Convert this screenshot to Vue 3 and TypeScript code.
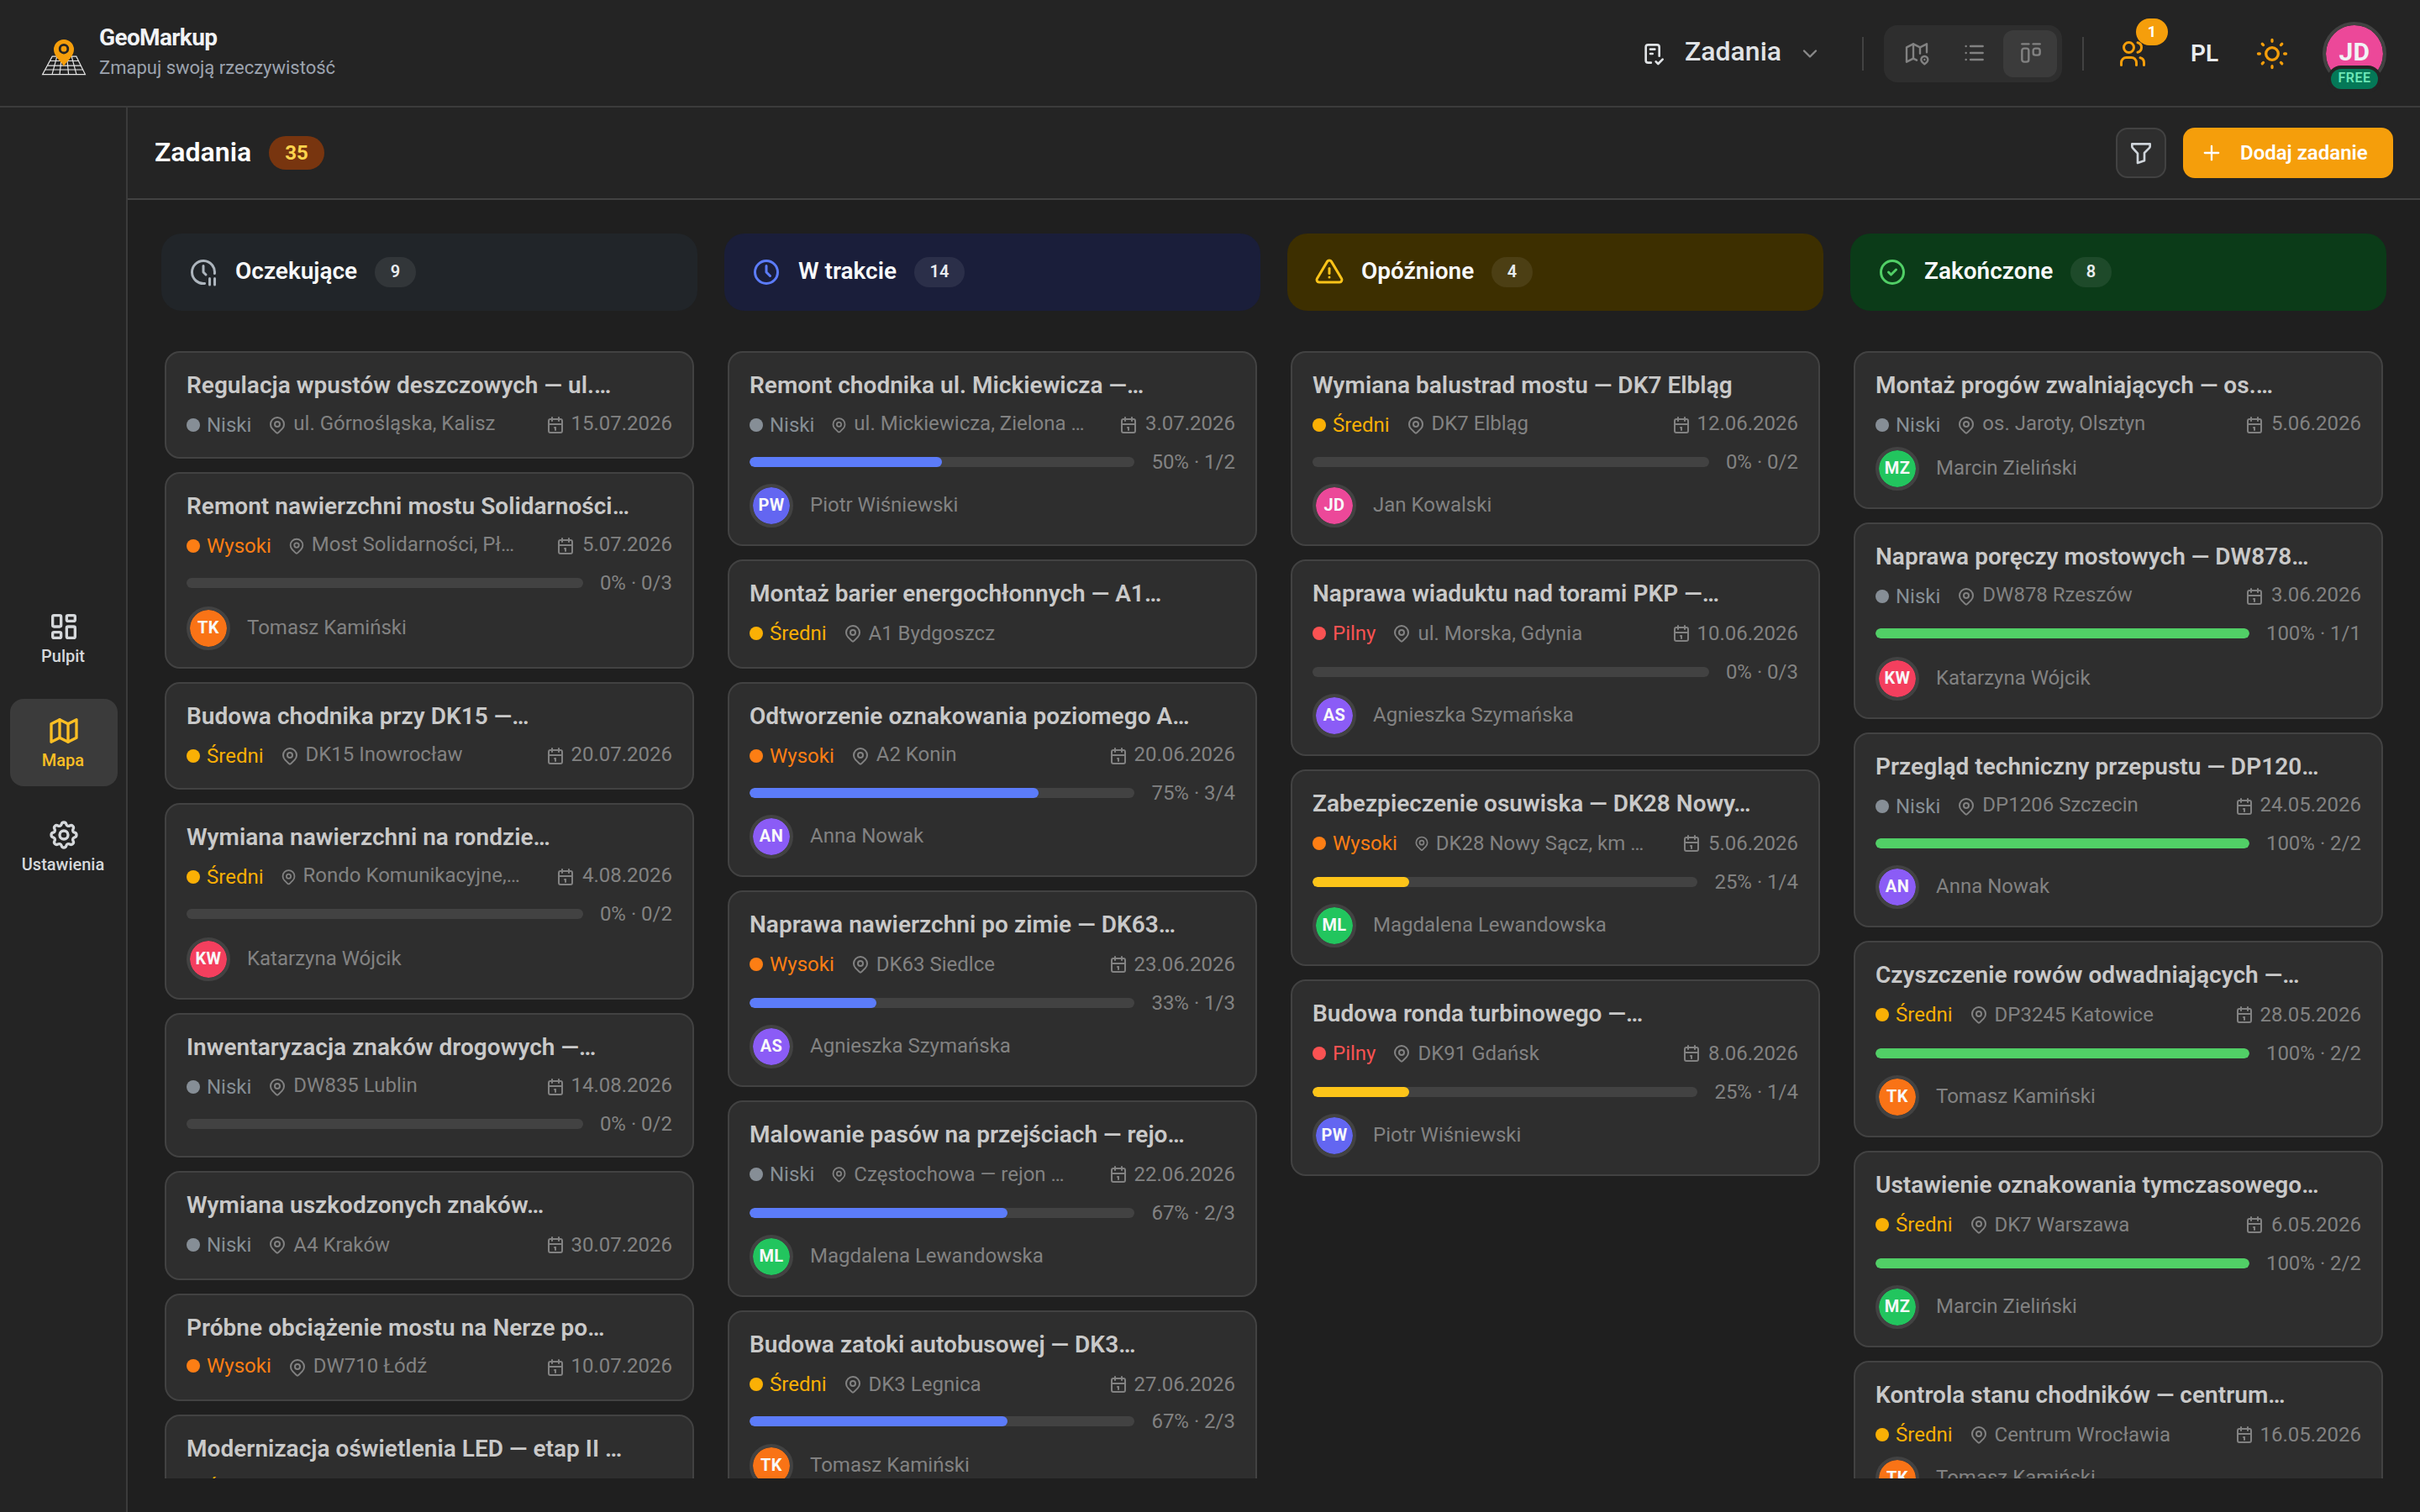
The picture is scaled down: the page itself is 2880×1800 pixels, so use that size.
<script setup lang="ts">
type Priority = 'low' | 'mid' | 'high' | 'urgent'

interface Task {
  h: number
  title: string
  prio: Priority
  place: string
  pin?: number
  date?: string
  pct?: number
  steps?: string
  who?: string
  // small vertical offsets of the card's rows, in pixels
  prioUp?: number
  placeDown?: number
  barDown?: number
  whoDown?: number
}

interface Column {
  key: string
  name: string
  icon: string[]
  count: number
  tasks: Task[]
}

const prioNames: Record<Priority, string> = {
  low: 'Niski',
  mid: 'Średni',
  high: 'Wysoki',
  urgent: 'Pilny',
}

const people: Record<string, { name: string; color: string }> = {
  TK: { name: 'Tomasz Kamiński', color: '#f97316' },
  KW: { name: 'Katarzyna Wójcik', color: '#f43f5e' },
  PW: { name: 'Piotr Wiśniewski', color: '#6366f1' },
  AN: { name: 'Anna Nowak', color: '#8b5cf6' },
  AS: { name: 'Agnieszka Szymańska', color: '#8b5cf6' },
  ML: { name: 'Magdalena Lewandowska', color: '#22c55e' },
  JD: { name: 'Jan Kowalski', color: '#ec4899' },
  MZ: { name: 'Marcin Zieliński', color: '#22c55e' },
}

const icons = {
  clockPause: ['M20.942 13.018a9 9 0 1 0 -7.909 7.922', 'M12 7v5l2 2', 'M17 17v5', 'M21 17v5'],
  clock: ['M3 12a9 9 0 1 0 18 0a9 9 0 0 0 -18 0', 'M12 7v5l3 3'],
  alert: [
    'M12 9v4',
    'M10.363 3.591l-8.106 13.534a1.914 1.914 0 0 0 1.636 2.871h16.214a1.914 1.914 0 0 0 1.636 -2.87l-8.106 -13.536a1.914 1.914 0 0 0 -3.274 0z',
    'M12 16h.01',
  ],
  check: ['M3 12a9 9 0 1 0 18 0a9 9 0 0 0 -18 0', 'M9 12l2 2l4 -4'],
  pin: [
    'M9 11a3 3 0 1 0 6 0a3 3 0 0 0 -6 0',
    'M17.657 16.657l-4.243 4.243a2 2 0 0 1 -2.827 0l-4.244 -4.243a8 8 0 1 1 11.314 0z',
  ],
  calendar: [
    'M4 7a2 2 0 0 1 2 -2h12a2 2 0 0 1 2 2v12a2 2 0 0 1 -2 2h-12a2 2 0 0 1 -2 -2v-12z',
    'M16 3v4',
    'M8 3v4',
    'M4 11h16',
    'M11 15h1',
    'M12 15v3',
  ],
  checklist: [
    'M9.615 20h-2.615a2 2 0 0 1 -2 -2v-12a2 2 0 0 1 2 -2h8a2 2 0 0 1 2 2v8',
    'M14 19l2 2l4 -4',
    'M9 8h4',
    'M9 12h2',
  ],
  chevron: ['M6 9l6 6l6 -6'],
  mapPin: [
    'M12 18.5l-3 -1.5l-6 3v-13l6 -3l6 3l6 -3v7.5',
    'M9 4v13',
    'M15 7v5.5',
    'M21.121 20.121a3 3 0 1 0 -4.242 0c.418 .419 1.125 1.045 2.121 1.879c1.051 -.89 1.759 -1.516 2.121 -1.879z',
    'M19 18v.01',
  ],
  list: ['M9 6l11 0', 'M9 12l11 0', 'M9 18l11 0', 'M5 6l0 .01', 'M5 12l0 .01', 'M5 18l0 .01'],
  kanban: [
    'M4 4l6 0',
    'M14 4l6 0',
    'M4 10a2 2 0 0 1 2 -2h2a2 2 0 0 1 2 2v8a2 2 0 0 1 -2 2h-2a2 2 0 0 1 -2 -2z',
    'M14 10a2 2 0 0 1 2 -2h2a2 2 0 0 1 2 2v2a2 2 0 0 1 -2 2h-2a2 2 0 0 1 -2 -2z',
  ],
  users: [
    'M5 7a4 4 0 1 0 8 0a4 4 0 1 0 -8 0',
    'M3 21v-2a4 4 0 0 1 4 -4h4a4 4 0 0 1 4 4v2',
    'M16 3.13a4 4 0 0 1 0 7.75',
    'M21 21v-2a4 4 0 0 0 -3 -3.85',
  ],
  sun: [
    'M8 12a4 4 0 1 0 8 0a4 4 0 1 0 -8 0',
    'M3 12h1m8 -9v1m8 8h1m-9 8v1m-6.4 -15.4l.7 .7m12.1 -.7l-.7 .7m0 11.4l.7 .7m-12.1 -.7l-.7 .7',
  ],
  filter: [
    'M4 4h16v2.172a2 2 0 0 1 -.586 1.414l-4.414 4.414v7l-6 2v-8.5l-4.48 -4.928a2 2 0 0 1 -.52 -1.345v-2.227z',
  ],
  plus: ['M12 5l0 14', 'M5 12l14 0'],
  dashboard: [
    'M5 4h4a1 1 0 0 1 1 1v6a1 1 0 0 1 -1 1h-4a1 1 0 0 1 -1 -1v-6a1 1 0 0 1 1 -1',
    'M5 16h4a1 1 0 0 1 1 1v2a1 1 0 0 1 -1 1h-4a1 1 0 0 1 -1 -1v-2a1 1 0 0 1 1 -1',
    'M15 12h4a1 1 0 0 1 1 1v6a1 1 0 0 1 -1 1h-4a1 1 0 0 1 -1 -1v-6a1 1 0 0 1 1 -1',
    'M15 4h4a1 1 0 0 1 1 1v2a1 1 0 0 1 -1 1h-4a1 1 0 0 1 -1 -1v-2a1 1 0 0 1 1 -1',
  ],
  map: ['M3 7l6 -3l6 3l6 -3v13l-6 3l-6 -3l-6 3v-13', 'M9 4v13', 'M15 7v13'],
  settings: [
    'M10.325 4.317c.426 -1.756 2.924 -1.756 3.35 0a1.724 1.724 0 0 0 2.573 1.066c1.543 -.94 3.31 .826 2.37 2.37a1.724 1.724 0 0 0 1.065 2.572c1.756 .426 1.756 2.924 0 3.35a1.724 1.724 0 0 0 -1.066 2.573c.94 1.543 -.826 3.31 -2.37 2.37a1.724 1.724 0 0 0 -2.572 1.065c-.426 1.756 -2.924 1.756 -3.35 0a1.724 1.724 0 0 0 -2.573 -1.066c-1.543 .94 -3.31 -.826 -2.37 -2.37a1.724 1.724 0 0 0 -1.065 -2.572c-1.756 -.426 -1.756 -2.924 0 -3.35a1.724 1.724 0 0 0 1.066 -2.573c-.94 -1.543 .826 -3.31 2.37 -2.37c1 .608 2.296 .07 2.572 -1.065z',
    'M9 12a3 3 0 1 0 6 0a3 3 0 0 0 -6 0',
  ],
}

const nav = [
  { label: 'Pulpit', icon: icons.dashboard, active: false },
  { label: 'Mapa', icon: icons.map, active: true },
  { label: 'Ustawienia', icon: icons.settings, active: false },
]

const views = [
  { icon: icons.mapPin, active: false },
  { icon: icons.list, active: false },
  { icon: icons.kanban, active: true },
]

const columns: Column[] = [
  {
    key: 'waiting',
    name: 'Oczekujące',
    icon: icons.clockPause,
    count: 9,
    tasks: [
      { h: 128, title: 'Regulacja wpustów deszczowych — ul.…', prio: 'low', place: 'ul. Górnośląska, Kalisz', date: '15.07.2026' },
      { h: 234, title: 'Remont nawierzchni mostu Solidarności…', prio: 'high', place: 'Most Solidarności, Pł…', pin: 22, date: '5.07.2026', pct: 0, steps: '0/3', who: 'TK', whoDown: 2 },
      { h: 128, title: 'Budowa chodnika przy DK15 —…', prio: 'mid', place: 'DK15 Inowrocław', date: '20.07.2026' },
      { h: 234, title: 'Wymiana nawierzchni na rondzie…', prio: 'mid', place: 'Rondo Komunikacyjne,…', pin: 21, date: '4.08.2026', pct: 0, steps: '0/2', who: 'KW', whoDown: 2 },
      { h: 172, title: 'Inwentaryzacja znaków drogowych —…', prio: 'low', place: 'DW835 Lublin', date: '14.08.2026', pct: 0, steps: '0/2' },
      { h: 130, title: 'Wymiana uszkodzonych znaków…', prio: 'low', place: 'A4 Kraków', date: '30.07.2026', placeDown: 2 },
      { h: 128, title: 'Próbne obciążenie mostu na Nerze po…', prio: 'high', place: 'DW710 Łódź', date: '10.07.2026', prioUp: 2 },
      { h: 130, title: 'Modernizacja oświetlenia LED — etap II …', prio: 'mid', place: 'Rzeszów', date: '25.07.2026' },
    ],
  },
  {
    key: 'progress',
    name: 'W trakcie',
    icon: icons.clock,
    count: 14,
    tasks: [
      { h: 232, title: 'Remont chodnika ul. Mickiewicza —…', prio: 'low', place: 'ul. Mickiewicza, Zielona …', pin: 21, date: '3.07.2026', pct: 50, steps: '1/2', who: 'PW' },
      { h: 130, title: 'Montaż barier energochłonnych — A1…', prio: 'mid', place: 'A1 Bydgoszcz', placeDown: 2 },
      { h: 232, title: 'Odtworzenie oznakowania poziomego A…', prio: 'high', place: 'A2 Konin', date: '20.06.2026', pct: 75, steps: '3/4', who: 'AN' },
      { h: 234, title: 'Naprawa nawierzchni po zimie — DK63…', prio: 'high', place: 'DK63 Siedlce', date: '23.06.2026', pct: 33, steps: '1/3', who: 'AS', placeDown: 2, barDown: 2 },
      { h: 234, title: 'Malowanie pasów na przejściach — rejo…', prio: 'low', place: 'Częstochowa — rejon …', pin: 21, date: '22.06.2026', pct: 67, steps: '2/3', who: 'ML', placeDown: 2, barDown: 2 },
      { h: 234, title: 'Budowa zatoki autobusowej — DK3…', prio: 'mid', place: 'DK3 Legnica', date: '27.06.2026', pct: 67, steps: '2/3', who: 'TK', placeDown: 2, whoDown: 1 },
    ],
  },
  {
    key: 'late',
    name: 'Opóźnione',
    icon: icons.alert,
    count: 4,
    tasks: [
      { h: 232, title: 'Wymiana balustrad mostu — DK7 Elbląg', prio: 'mid', place: 'DK7 Elbląg', date: '12.06.2026', pct: 0, steps: '0/2', who: 'JD' },
      { h: 234, title: 'Naprawa wiaduktu nad torami PKP —…', prio: 'urgent', place: 'ul. Morska, Gdynia', date: '10.06.2026', pct: 0, steps: '0/3', who: 'AS', placeDown: 2, barDown: 2 },
      { h: 234, title: 'Zabezpieczenie osuwiska — DK28 Nowy…', prio: 'high', place: 'DK28 Nowy Sącz, km …', pin: 20, date: '5.06.2026', pct: 25, steps: '1/4', who: 'ML', placeDown: 2, barDown: 2 },
      { h: 234, title: 'Budowa ronda turbinowego —…', prio: 'urgent', place: 'DK91 Gdańsk', date: '8.06.2026', pct: 25, steps: '1/4', who: 'PW', placeDown: 2, barDown: 2 },
    ],
  },
  {
    key: 'done',
    name: 'Zakończone',
    icon: icons.check,
    count: 8,
    tasks: [
      { h: 188, title: 'Montaż progów zwalniających — os.…', prio: 'low', place: 'os. Jaroty, Olsztyn', date: '5.06.2026', who: 'MZ' },
      { h: 234, title: 'Naprawa poręczy mostowych — DW878…', prio: 'low', place: 'DW878 Rzeszów', date: '3.06.2026', pct: 100, steps: '1/1', who: 'KW', whoDown: 2 },
      { h: 232, title: 'Przegląd techniczny przepustu — DP120…', prio: 'low', place: 'DP1206 Szczecin', date: '24.05.2026', pct: 100, steps: '2/2', who: 'AN' },
      { h: 234, title: 'Czyszczenie rowów odwadniających —…', prio: 'mid', place: 'DP3245 Katowice', date: '28.05.2026', pct: 100, steps: '2/2', who: 'TK', placeDown: 2, barDown: 2 },
      { h: 234, title: 'Ustawienie oznakowania tymczasowego…', prio: 'mid', place: 'DK7 Warszawa', date: '6.05.2026', pct: 100, steps: '2/2', who: 'MZ', placeDown: 2, barDown: 2 },
      { h: 188, title: 'Kontrola stanu chodników — centrum…', prio: 'mid', place: 'Centrum Wrocławia', date: '16.05.2026', who: 'TK', placeDown: 2 },
    ],
  },
]
</script>

<template>
  <div class="app">
    <header class="topbar">
      <div class="brand">
        <svg class="logo" viewBox="0 0 54 46">
          <g fill="none" stroke="#e6e6e6" stroke-width="1.2">
            <path d="M13.2 21.2h28.6L52.4 42.6H1.6z" />
            <path d="M11 26.5h33M8 32.2h39M4.9 37h45.2" />
            <path d="M18.8 21.2L13 42.6M24.4 21.2L22 42.6M30.6 21.2L32.6 42.6M36.2 21.2L42 42.6" />
          </g>
          <path
            d="M27 33C24 27 15 21.5 15 13a12 12 0 0 1 24 0C39 21.5 30 27 27 33z"
            fill="#f59e0b"
          />
          <circle cx="27" cy="12.2" r="4.8" fill="none" stroke="#242424" stroke-width="2.8" />
        </svg>
        <div class="brand-text">
          <div class="brand-name">GeoMarkup</div>
          <div class="brand-sub">Zmapuj swoją rzeczywistość</div>
        </div>
      </div>

      <div class="tools">
        <div class="switcher">
          <svg class="ic ic-task" viewBox="0 0 24 24"><path v-for="d in icons.checklist" :key="d" :d="d" /></svg>
          <span class="switcher-name">Zadania</span>
          <svg class="ic ic-chev" viewBox="0 0 24 24"><path v-for="d in icons.chevron" :key="d" :d="d" /></svg>
        </div>
        <span class="divider" />
        <div class="segment">
          <button v-for="(v, i) in views" :key="i" class="seg-btn" :class="{ active: v.active }">
            <svg class="ic ic-view" viewBox="0 0 24 24"><path v-for="d in v.icon" :key="d" :d="d" /></svg>
          </button>
        </div>
        <span class="divider divider-2" />
        <div class="team">
          <svg class="ic ic-users" viewBox="0 0 24 24"><path v-for="d in icons.users" :key="d" :d="d" /></svg>
          <span class="team-badge">1</span>
        </div>
        <span class="lang">PL</span>
        <svg class="ic ic-sun" viewBox="0 0 24 24"><path v-for="d in icons.sun" :key="d" :d="d" /></svg>
        <div class="me">
          <span class="me-initials">JD</span>
          <span class="me-plan">FREE</span>
        </div>
      </div>
    </header>

    <div class="body">
      <nav class="sidebar">
        <a v-for="n in nav" :key="n.label" class="nav-item" :class="{ active: n.active }">
          <svg class="ic ic-nav" viewBox="0 0 24 24"><path v-for="d in n.icon" :key="d" :d="d" /></svg>
          <span>{{ n.label }}</span>
        </a>
      </nav>

      <main class="main">
        <div class="toolbar">
          <h1>Zadania</h1>
          <span class="total">35</span>
          <button class="btn-filter">
            <svg class="ic ic-filter" viewBox="0 0 24 24"><path v-for="d in icons.filter" :key="d" :d="d" /></svg>
          </button>
          <button class="btn-add">
            <svg class="ic ic-plus" viewBox="0 0 24 24"><path v-for="d in icons.plus" :key="d" :d="d" /></svg>
            <span>Dodaj zadanie</span>
          </button>
        </div>

        <div class="board">
          <section v-for="c in columns" :key="c.key" class="column" :class="c.key">
            <div class="col-head">
              <svg class="ic ic-col" viewBox="0 0 24 24"><path v-for="d in c.icon" :key="d" :d="d" /></svg>
              <span class="col-name">{{ c.name }}</span>
              <span class="col-count">{{ c.count }}</span>
            </div>
            <div class="cards">
              <article v-for="t in c.tasks" :key="t.title" class="card" :style="{ height: t.h + 'px' }">
                <div class="title">{{ t.title }}</div>
                <div class="meta">
                  <span
                    class="prio"
                    :class="t.prio"
                    :style="{ marginTop: -2 * (t.prioUp ?? 0) + 'px' }"
                  ><i class="dot" />{{ prioNames[t.prio] }}</span>
                  <svg
                    class="ic ic-pin"
                    viewBox="0 0 24 24"
                    :style="{ width: (t.pin ?? 24) + 'px' }"
                  ><path v-for="d in icons.pin" :key="d" :d="d" /></svg>
                  <span class="muted" :style="{ marginTop: 2 * (t.placeDown ?? 0) - 4 + 'px' }">{{ t.place }}</span>
                  <span v-if="t.date" class="date" :class="{ short: t.date.length < 10 }">
                    <svg class="ic ic-cal" viewBox="0 0 24 24"><path v-for="d in icons.calendar" :key="d" :d="d" /></svg>
                    <span class="muted" :style="{ marginTop: 2 * (t.placeDown ?? 0) - 4 + 'px' }">{{ t.date }}</span>
                  </span>
                </div>
                <div v-if="t.steps" class="progress" :style="{ marginTop: 10 + (t.barDown ?? 0) + 'px' }">
                  <div class="track"><div class="fill" :style="{ width: t.pct + '%' }" /></div>
                  <span>{{ t.pct }}% · {{ t.steps }}</span>
                </div>
                <div v-if="t.who" class="person" :style="{ marginTop: (t.steps ? 8 : 10) + (t.whoDown ?? 0) + 'px' }">
                  <span class="avatar" :style="{ backgroundColor: people[t.who].color }">{{ t.who }}</span>
                  <span class="person-name">{{ people[t.who].name }}</span>
                </div>
              </article>
            </div>
          </section>
        </div>
      </main>
    </div>
  </div>
</template>

<style>
body {
  background: #1f1f1f;
}
</style>

<style scoped>
.app {
  display: flex;
  flex-direction: column;
  width: 2880px;
  height: 1800px;
  overflow: hidden;
  background: #1f1f1f;
  color: #f1f3f5;
  font-family: Roboto, 'Liberation Sans', sans-serif;
}
.app *,
.app {
  box-sizing: border-box;
}
button {
  padding: 0;
  border: 0;
  font-family: inherit;
}
.ic {
  display: block;
  flex: none;
  fill: none;
  stroke: currentColor;
  stroke-width: 2;
  stroke-linecap: round;
  stroke-linejoin: round;
}

.topbar {
  display: flex;
  flex: none;
  justify-content: space-between;
  height: 128px;
  padding: 0 40px 0 49px;
  border-bottom: 2px solid #3b3b3b;
  background: #242424;
}
.brand {
  display: flex;
  align-items: flex-start;
}
.logo {
  width: 54px;
  height: 46px;
  margin-top: 46px;
}
.brand-text {
  margin: 28px 0 0 15px;
}
.brand-name {
  font-size: 28px;
  font-weight: 700;
  letter-spacing: -0.65px;
  line-height: 34px;
}
.brand-sub {
  margin-top: 4px;
  color: #9ca3af;
  font-size: 22px;
  line-height: 30px;
}
.tools {
  display: flex;
  align-items: center;
  height: 128px;
}
.switcher {
  display: flex;
  align-items: center;
  width: 264px;
  color: #e0e3e6;
}
.ic-task {
  width: 32px;
  height: 32px;
}
.switcher-name {
  width: 135px;
  margin: -6px 0 0 21px;
  font-size: 32px;
  font-weight: 500;
  line-height: 40px;
}
.ic-chev {
  width: 28px;
  height: 28px;
  color: #8a8a8a;
}
.divider {
  width: 2px;
  height: 40px;
  background: #424242;
}
.segment {
  display: flex;
  gap: 4px;
  margin-left: 24px;
  padding: 6px;
  border-radius: 16px;
  background: #2e2e2e;
}
.seg-btn {
  display: flex;
  align-items: center;
  justify-content: center;
  width: 64px;
  height: 56px;
  border-radius: 12px;
  background: transparent;
  color: #828282;
}
.seg-btn.active {
  background: #3b3b3b;
}
.ic-view {
  width: 32px;
  height: 32px;
  margin: -2px 0 0 1px;
  stroke-width: 1.8;
}
.divider-2 {
  margin-left: 24px;
}
.team {
  position: relative;
  margin-left: 40px;
  color: #f59e0b;
}
.ic-users {
  width: 36px;
  height: 36px;
}
.team-badge {
  position: absolute;
  top: -24px;
  left: 22px;
  width: 38px;
  height: 32px;
  border-radius: 16px;
  background: #f59e0b;
  color: #fff;
  font-size: 18px;
  font-weight: 700;
  line-height: 31px;
  text-align: center;
}
.lang {
  width: 75px;
  margin-left: 51px;
  color: #e9ecef;
  font-size: 28px;
  font-weight: 600;
  line-height: 36px;
}
.ic-sun {
  width: 44px;
  height: 44px;
  color: #f59e0b;
  stroke-width: 1.8;
}
.me {
  position: relative;
  display: flex;
  align-items: center;
  justify-content: center;
  width: 76px;
  height: 76px;
  margin-left: 38px;
  border: 4px solid #424242;
  border-radius: 50%;
  background: #ec4899;
  background-clip: padding-box;
}
.me-initials {
  margin-top: -6px;
  font-size: 30px;
  font-weight: 700;
  letter-spacing: 0.3px;
}
.me-plan {
  position: absolute;
  top: 52px;
  left: 6px;
  width: 56px;
  height: 24px;
  border-radius: 12px;
  background: #047857;
  box-shadow: 0 0 0 4px #242424;
  color: #6ee7b7;
  font-size: 16px;
  font-weight: 600;
  letter-spacing: 0.5px;
  line-height: 22px;
  text-align: center;
}

.body {
  display: flex;
  flex: 1;
  min-height: 0;
}
.sidebar {
  display: flex;
  flex: none;
  flex-direction: column;
  gap: 20px;
  width: 152px;
  padding: 580px 0 0 12px;
  border-right: 2px solid #3b3b3b;
  background: #242424;
}
.nav-item {
  display: flex;
  flex-direction: column;
  align-items: center;
  width: 128px;
  height: 104px;
  padding-top: 18px;
  border-radius: 16px;
  color: #d5d8db;
  font-size: 20px;
  font-weight: 500;
  line-height: 26px;
}
.nav-item span {
  margin: 2px 2px 0 0;
}
.nav-item.active {
  background: #3b3b3b;
  color: #fbbf24;
}
.ic-nav {
  width: 40px;
  height: 40px;
}

.main {
  display: flex;
  flex: 1;
  flex-direction: column;
  min-width: 0;
}
.toolbar {
  display: flex;
  flex: none;
  align-items: center;
  height: 110px;
  padding: 0 32px 0 32px;
  border-bottom: 2px solid #424242;
  background: #242424;
}
h1 {
  margin: -2px 0 0;
  color: #fff;
  font-size: 32px;
  font-weight: 600;
  line-height: 40px;
}
.total {
  width: 66px;
  height: 40px;
  margin-left: 21px;
  border-radius: 20px;
  background: #78350f;
  color: #fcd34d;
  font-size: 24px;
  font-weight: 700;
  line-height: 40px;
  text-align: center;
}
.btn-filter {
  display: flex;
  align-items: center;
  justify-content: center;
  width: 60px;
  height: 60px;
  margin-left: auto;
  border: 2px solid #424242;
  border-radius: 14px;
  background: #2e2e2e;
  color: #ced4da;
}
.ic-filter {
  width: 32px;
  height: 32px;
}
.btn-add {
  display: flex;
  align-items: center;
  width: 250px;
  height: 60px;
  margin-left: 20px;
  padding-left: 20px;
  border-radius: 14px;
  background: #f59e0b;
  color: #fff;
  font-size: 24px;
  font-weight: 600;
}
.ic-plus {
  width: 28px;
  height: 28px;
}
.btn-add span {
  margin-left: 20px;
}

.board {
  display: grid;
  flex: 1;
  grid-template-columns: repeat(4, 638px);
  gap: 32px;
  min-height: 0;
  padding: 40px 40px 40px 40px;
}
.column {
  display: flex;
  flex-direction: column;
  min-height: 0;
}
.col-head {
  display: flex;
  flex: none;
  align-items: center;
  height: 92px;
  padding-left: 32px;
  border-radius: 24px;
}
.waiting .col-head {
  background: #212529;
}
.progress .col-head {
  background: #1a1e3a;
}
.late .col-head {
  background: #3d2f00;
}
.done .col-head {
  background: #0b3b18;
}
.ic-col {
  width: 36px;
  height: 36px;
}
.waiting .ic-col {
  color: #adb5bd;
}
.progress .ic-col {
  color: #5c7cfa;
}
.late .ic-col {
  color: #fcc419;
}
.done .ic-col {
  color: #51cf66;
}
.col-name {
  margin: -3px 21px 0 20px;
  color: #f8f9fa;
  font-size: 28px;
  font-weight: 600;
}
.col-count {
  height: 36px;
  padding: 0 18.5px;
  border-radius: 18px;
  background: rgba(255, 255, 255, 0.08);
  color: #e9ecef;
  font-size: 20px;
  font-weight: 600;
  line-height: 35px;
}

.cards {
  display: flex;
  flex: 1;
  flex-direction: column;
  gap: 16px;
  min-height: 0;
  margin-top: 48px;
  padding: 0 4px;
  overflow: hidden;
}
.card {
  flex: none;
  padding: 24px 24px 0;
  border: 2px solid #424242;
  border-radius: 18px;
  background: #2e2e2e;
  white-space: nowrap;
}
.title {
  color: #c9c9c9;
  font-size: 28px;
  font-weight: 600;
  letter-spacing: 0.03px;
  line-height: 30px;
}
.meta {
  display: flex;
  align-items: center;
  height: 32px;
  margin-top: 16px;
  color: #828282;
  font-size: 24px;
  line-height: 32px;
}
.prio {
  display: flex;
  align-items: center;
  margin-right: 19px;
}
.dot {
  width: 16px;
  height: 16px;
  margin-right: 8px;
  border-radius: 50%;
  background: currentColor;
}
.low {
  color: #868e96;
}
.mid {
  color: #fab005;
}
.high {
  color: #fd7e14;
}
.urgent {
  color: #fa5252;
}
.ic-pin,
.ic-cal {
  width: 24px;
  height: 24px;
  margin-right: 7px;
}
.ic-cal {
  margin-right: 6px;
}
.short .ic-cal {
  margin-right: 8px;
}
.date {
  display: flex;
  align-items: center;
  margin-left: auto;
}
.card .progress {
  display: flex;
  align-items: center;
  height: 36px;
  color: #828282;
  font-size: 24px;
}
.track {
  flex: 1;
  height: 12px;
  margin-right: 20px;
  border-radius: 6px;
  background: #424242;
  overflow: hidden;
}
.fill {
  height: 100%;
  border-radius: 6px;
  background: #5c7cfa;
}
.late .fill {
  background: #fcc419;
}
.done .fill {
  background: #51cf66;
}
.person {
  display: flex;
  align-items: center;
  color: #828282;
  font-size: 24px;
}
.avatar {
  width: 52px;
  height: 52px;
  border: 4px solid #424242;
  border-radius: 50%;
  background-clip: padding-box;
  color: #f8f9fa;
  font-size: 20px;
  font-weight: 700;
  letter-spacing: 0.4px;
  line-height: 43px;
  text-align: center;
}
.person-name {
  margin: -2px 0 0 20px;
}
</style>
